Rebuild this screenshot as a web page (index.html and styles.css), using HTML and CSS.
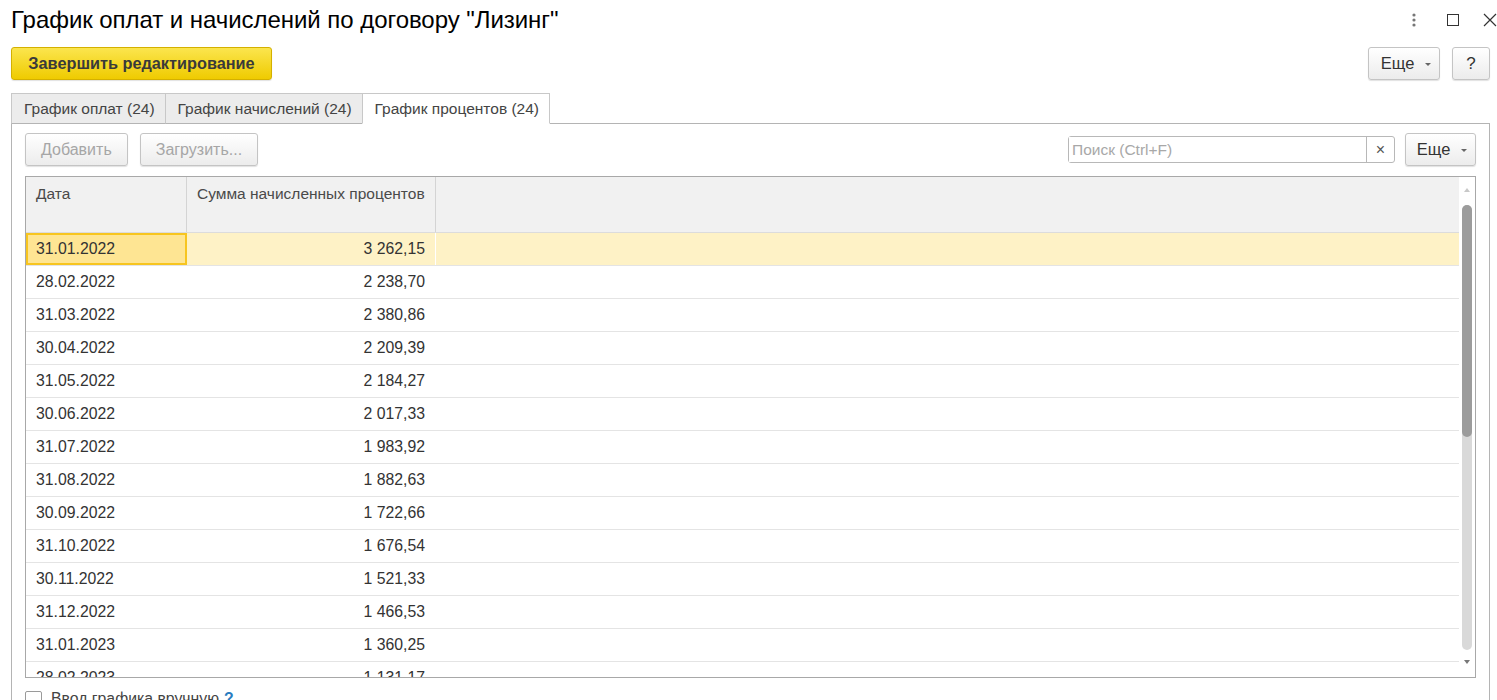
FILE: index.html
```html
<!DOCTYPE html>
<html lang="ru">
<head>
    <meta charset="UTF-8">
    <title>График оплат и начислений по договору "Лизинг"</title>
    <link rel="stylesheet" href="styles.css">
</head>
<body>

    <!-- Заголовок формы -->
    <div class="title-bar">
        <h1>График оплат и начислений по договору "Лизинг"</h1>
        <div class="window-icons">
            <svg class="kebab" width="6" height="16" viewBox="0 0 6 16"><circle cx="3" cy="3" r="1.6" fill="#777"/><circle cx="3" cy="8" r="1.6" fill="#777"/><circle cx="3" cy="13" r="1.6" fill="#777"/></svg>
            <svg class="maxi" width="12" height="12" viewBox="0 0 12 12"><rect x="0.5" y="0.5" width="11" height="11" fill="none" stroke="#333"/></svg>
            <svg width="14" height="14" viewBox="0 0 14 14"><path d="M1 1 L13 13 M13 1 L1 13" stroke="#333" stroke-width="1.2"/></svg>
        </div>
    </div>

    <!-- Командная панель -->
    <div class="command-bar">
        <button class="btn btn-main">Завершить редактирование</button>
        <div class="spacer"></div>
        <button class="btn btn-more">Еще <span class="caret"></span></button>
        <button class="btn btn-help">?</button>
    </div>

    <!-- Вкладки -->
    <div class="tabs">
        <div class="tab">График оплат (24)</div>
        <div class="tab">График начислений (24)</div>
        <div class="tab active">График процентов (24)</div>
    </div>

    <div class="panel">
        <div class="toolbar">
            <button class="btn" disabled>Добавить</button>
            <button class="btn" disabled>Загрузить...</button>
            <div class="spacer"></div>
            <div class="search">
                <input type="text" placeholder="Поиск (Ctrl+F)">
                <span class="search-clear">×</span>
            </div>
            <button class="btn btn-more">Еще <span class="caret"></span></button>
        </div>

        <div class="grid">
            <div class="grid-main">
                <div class="grid-head">
                    <div class="cell c-date">Дата</div>
                    <div class="cell c-sum">Сумма начисленных процентов</div>
                    <div class="cell c-rest"></div>
                </div>
                <div id="rows"></div>
            </div>
            <div class="scrollbar">
                <span class="arrow up"></span>
                <div class="track">
                    <div class="thumb"></div>
                </div>
                <span class="arrow down"></span>
            </div>
        </div>

        <label class="check">
            <span class="box"></span>
            Ввод графика вручную <span class="hint">?</span>
        </label>
    </div>

    <script>
        // Строки графика процентов
        const datos = [
            ['31.01.2022', '3 262,15'],
            ['28.02.2022', '2 238,70'],
            ['31.03.2022', '2 380,86'],
            ['30.04.2022', '2 209,39'],
            ['31.05.2022', '2 184,27'],
            ['30.06.2022', '2 017,33'],
            ['31.07.2022', '1 983,92'],
            ['31.08.2022', '1 882,63'],
            ['30.09.2022', '1 722,66'],
            ['31.10.2022', '1 676,54'],
            ['30.11.2022', '1 521,33'],
            ['31.12.2022', '1 466,53'],
            ['31.01.2023', '1 360,25'],
            ['28.02.2023', '1 131,17']
        ];

        const contenedor = document.getElementById('rows');
        datos.forEach(function (fila, i) {
            const div = document.createElement('div');
            div.classList.add('row');
            if (i === 0) div.classList.add('selected');
            div.innerHTML = `
                <div class="cell c-date">${fila[0]}</div>
                <div class="cell c-sum">${fila[1]}</div>
                <div class="cell c-rest"></div>
            `;
            contenedor.appendChild(div);
        });
    </script>

</body>
</html>
```

FILE: styles.css
```css
body {
    font-family: "Liberation Sans", Arial, sans-serif;
    background-color: #ffffff;
    color: #333333;
    margin: 0;
    padding: 0;
    overflow: hidden;
}

.title-bar {
    display: flex;
    align-items: center;
    height: 40px;
    padding: 0 0 0 11px;
}

h1 {
    flex: 1;
    margin: 0;
    font-size: 24px;
    font-weight: normal;
    color: #000000;
    letter-spacing: -0.05px;
}

.window-icons {
    display: flex;
    align-items: center;
}

.window-icons .kebab {
    margin-right: 30px;
}

.window-icons .maxi {
    margin-right: 24px;
}

.command-bar {
    display: flex;
    align-items: center;
    padding: 7px 7px 0 11px;
    gap: 12px;
}

.spacer {
    flex: 1;
}

.btn {
    font-family: "Liberation Sans", Arial, sans-serif;
    font-size: 16px;
    color: #333333;
    height: 33px;
    padding: 0 15px;
    background: linear-gradient(#ffffff, #ececec);
    border: 1px solid #c4c4c4;
    border-radius: 3px;
    box-shadow: 0 1px 1px rgba(0, 0, 0, 0.12);
}

.btn:disabled {
    color: #a6a6a6;
}

.btn-main {
    width: 261px;
    font-size: 16.3px;
    font-weight: bold;
    background: linear-gradient(#fbe54e, #efcb00);
    border-color: #d4b000;
    color: #3a3a3a;
}

.btn-more {
    width: 72px;
    padding: 0 8px 0 10px;
    text-align: right;
    font-size: 16.5px;
}

.caret {
    display: inline-block;
    margin-left: 6px;
    vertical-align: middle;
    border-left: 3px solid transparent;
    border-right: 3px solid transparent;
    border-top: 3px solid #666;
}

.btn-help {
    width: 38px;
    padding: 0;
    font-size: 17px;
}

.tabs {
    display: flex;
    padding: 13px 0 0 11px;
    height: 31px;
}

.tab {
    padding: 6px 10px 0 12px;
    font-size: 15.5px;
    color: #444444;
    background-color: #ececec;
    border: 1px solid #c8c8c8;
    border-right: none;
    border-bottom: 1px solid #b4b4b4;
}

.tab.active {
    background-color: #ffffff;
    border-right: 1px solid #c8c8c8;
    border-bottom-color: #ffffff;
}

.panel {
    margin: -1px 7px 0 11px;
    border: 1px solid #b4b4b4;
    border-bottom: none;
    padding: 9px 13px 0 13px;
    height: 600px;
}

.toolbar {
    display: flex;
    align-items: center;
    gap: 12px;
}

.toolbar .btn-more {
    width: 71px;
    margin-left: -2px;
}

.search {
    display: flex;
    width: 325px;
    height: 25px;
    border: 1px solid #b8b8b8;
    border-radius: 3px;
}

.search input {
    flex: 1;
    border: none;
    outline: none;
    padding: 0 3px;
    font-family: "Liberation Sans", Arial, sans-serif;
    font-size: 15.5px;
}

.search input::placeholder {
    color: #a8a8a8;
}

.search-clear {
    width: 27px;
    border-left: 1px solid #b8b8b8;
    text-align: center;
    line-height: 25px;
    color: #555555;
    font-size: 16px;
}

.grid {
    display: flex;
    margin-top: 10px;
    height: 500px;
    border: 1px solid #a8a8a8;
    overflow: hidden;
}

.grid-main {
    flex: 1;
    overflow: hidden;
}

.grid-head {
    display: flex;
    height: 55px;
    background-color: #f1f1f1;
    border-bottom: 1px solid #dcdcdc;
}

.grid-head .cell {
    padding-top: 8px;
    border-right: 1px solid #d4d4d4;
    color: #4a4a4a;
    text-align: left;
    font-size: 15.5px;
    line-height: normal;
}

.grid-head .c-rest {
    border-right: none;
}

.row {
    display: flex;
    height: 32px;
    border-bottom: 1px solid #e4e4e4;
}

.cell {
    box-sizing: border-box;
    font-size: 15.8px;
    line-height: 32px;
    padding: 0 10px;
    border-right: 1px solid #ffffff;
    white-space: nowrap;
}

.c-date {
    width: 161px;
}

.c-sum {
    width: 249px;
    text-align: right;
}

.c-rest {
    flex: 1;
    border-right: none;
}

.row.selected {
    background-color: #fef2c6;
}

.row.selected .c-date {
    background-color: #fee593;
    border: 2px solid #f7c51f;
    line-height: 28px;
    padding-left: 8px;
}

.scrollbar {
    width: 16px;
    display: flex;
    flex-direction: column;
    align-items: center;
    background-color: #ffffff;
}

.arrow {
    display: block;
    border-left: 3px solid transparent;
    border-right: 3px solid transparent;
}

.arrow.up {
    margin: 11px 0 13px;
    border-bottom: 4px solid #c8c8c8;
}

.arrow.down {
    margin: 10px 0 0;
    border-top: 4px solid #777777;
}

.track {
    width: 10px;
    height: 445px;
    background-color: #d9d9d9;
    border-radius: 5px;
}

.thumb {
    height: 232px;
    background-color: #9c9c9c;
    border-radius: 5px;
}

.check {
    display: flex;
    align-items: center;
    gap: 9px;
    margin-top: 12px;
    font-size: 15.8px;
    color: #444444;
}

.box {
    width: 17px;
    height: 17px;
    border: 1px solid #9a9a9a;
    border-radius: 2px;
    box-sizing: border-box;
}

.hint {
    color: #2a7cc0;
    font-weight: bold;
    margin-left: -4px;
}
```
